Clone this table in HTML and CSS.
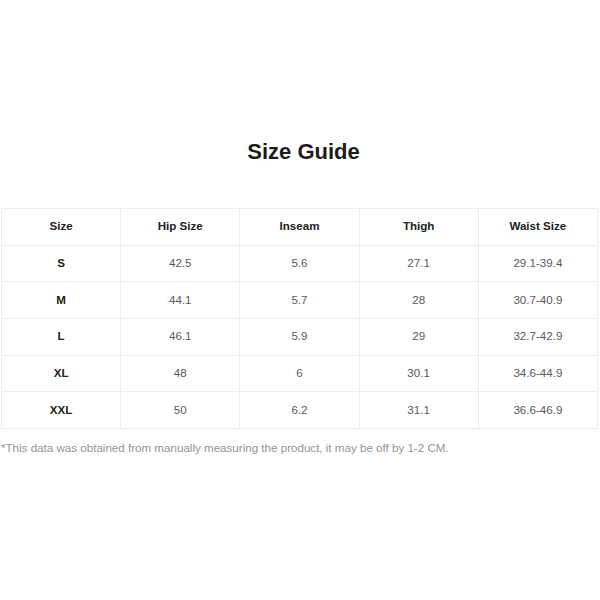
FILE: index.html
```html
<!DOCTYPE html>
<html>
<head>
<meta charset="utf-8">
<link rel="stylesheet" href="styles.css">
</head>
<body>
<div class="page">
  <h1 class="title">Size Guide</h1>
  <table class="guide">
    <thead>
      <tr><th>Size</th><th>Hip Size</th><th>Inseam</th><th>Thigh</th><th>Waist Size</th></tr>
    </thead>
    <tbody>
      <tr><th>S</th><td>42.5</td><td>5.6</td><td>27.1</td><td>29.1-39.4</td></tr>
      <tr><th>M</th><td>44.1</td><td>5.7</td><td>28</td><td>30.7-40.9</td></tr>
      <tr><th>L</th><td>46.1</td><td>5.9</td><td>29</td><td>32.7-42.9</td></tr>
      <tr><th>XL</th><td>48</td><td>6</td><td>30.1</td><td>34.6-44.9</td></tr>
      <tr><th>XXL</th><td>50</td><td>6.2</td><td>31.1</td><td>36.6-46.9</td></tr>
    </tbody>
  </table>
  <p class="note">*This data was obtained from manually measuring the product, it may be off by 1-2 CM.</p>
</div>
</body>
</html>
```
FILE: styles.css
```css
html, body {
  margin: 0;
  padding: 0;
  background: #fff;
}
.page {
  font-family: "Liberation Sans", Arial, sans-serif;
  padding: 139px 2px 0 1px;
}
.title {
  margin: 0 0 43px;
  padding-left: 8px;
  text-align: center;
  font-size: 22px;
  line-height: 26px;
  font-weight: bold;
  color: #1c1c1c;
}
.guide {
  width: 100%;
  border-collapse: collapse;
  table-layout: fixed;
}
.guide th, .guide td {
  border: 1px solid #ececec;
  height: 33.67px;
  padding: 0 0 2px;
  text-align: center;
  font-size: 11.6px;
}
.guide th {
  font-weight: bold;
  color: #222;
}
.guide td {
  color: #5a5a5a;
}
.note {
  margin: 12px 0 0;
  font-size: 11.6px;
  color: #949494;
}
```
